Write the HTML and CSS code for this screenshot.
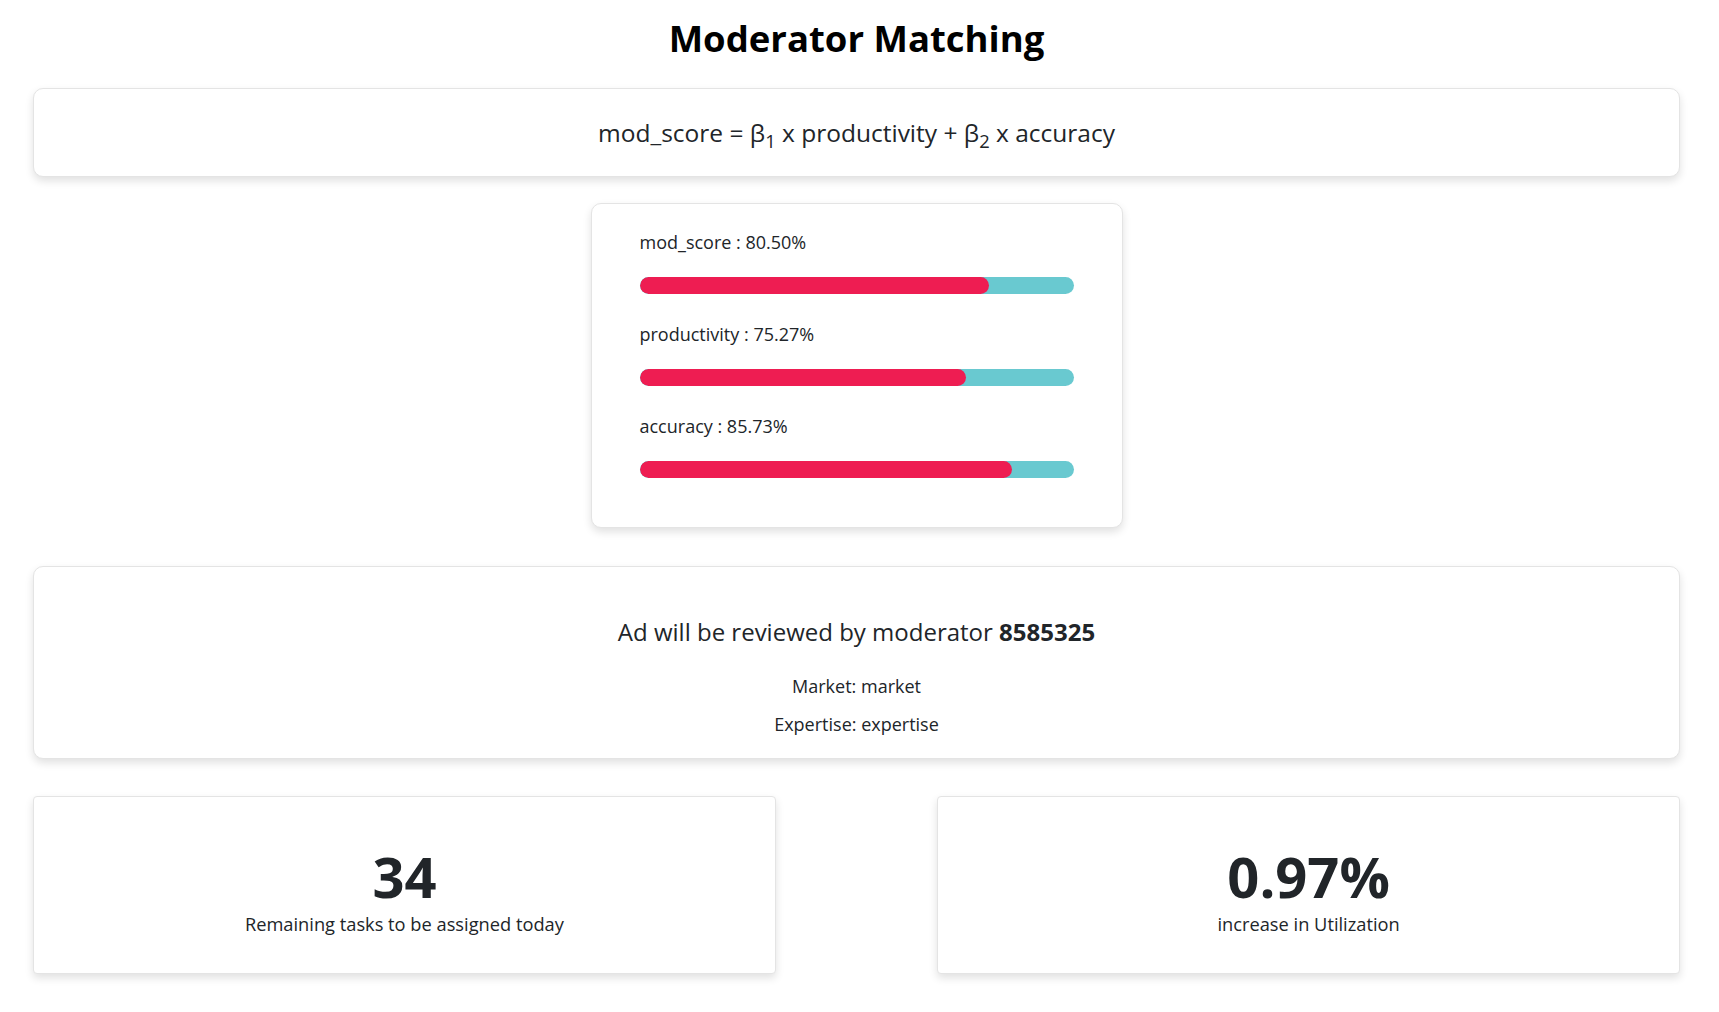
FILE: index.html
```html
<!DOCTYPE html>
<html lang="en">
<head>
<meta charset="utf-8">
<title>Moderator Matching</title>
<link rel="stylesheet" href="styles.css">
</head>
<body>
<div class="page">
  <h1 class="title">Moderator Matching</h1>

  <div class="card formula-card">
    <p class="formula">mod_score = β<sub>1</sub> x productivity + β<sub>2</sub> x accuracy</p>
  </div>

  <div class="card bars-card">
    <div class="metric">
      <div class="metric-label">mod_score : 80.50%</div>
      <div class="bar"><div class="bar-fill" style="width: 80.5%"></div></div>
    </div>
    <div class="metric">
      <div class="metric-label">productivity : 75.27%</div>
      <div class="bar"><div class="bar-fill" style="width: 75.27%"></div></div>
    </div>
    <div class="metric">
      <div class="metric-label">accuracy : 85.73%</div>
      <div class="bar"><div class="bar-fill" style="width: 85.73%"></div></div>
    </div>
  </div>

  <div class="card moderator-card">
    <p class="moderator-line">Ad will be reviewed by moderator <strong>8585325</strong></p>
    <p class="moderator-meta">Market: market</p>
    <p class="moderator-meta">Expertise: expertise</p>
  </div>

  <div class="stats">
    <div class="stat-card">
      <div class="stat-value">34</div>
      <div class="stat-label">Remaining tasks to be assigned today</div>
    </div>
    <div class="stat-card">
      <div class="stat-value">0.97%</div>
      <div class="stat-label">increase in Utilization</div>
    </div>
  </div>
</div>
</body>
</html>
```

FILE: styles.css
```css
* { box-sizing: border-box; }

html, body {
  margin: 0;
  padding: 0;
  background: #ffffff;
}

body {
  font-family: "Open Sans", "Noto Sans", "Liberation Sans", sans-serif;
  color: #212529;
}

.page {
  padding: 0 39px 30px 33px;
  display: flex;
  flex-direction: column;
}

.title {
  margin: 12px 0 0 0;
  height: 76px;
  font-size: 36.5px;
  line-height: 52px;
  font-weight: 700;
  color: #000;
  text-align: center;
}

.card {
  background: #fff;
  border: 1px solid #e4e4e4;
  border-radius: 10px;
  box-shadow: 0 4px 8px rgba(0, 0, 0, 0.12);
}

.formula-card {
  height: 89px;
  display: flex;
  align-items: center;
  justify-content: center;
}

.formula {
  margin: 0;
  font-size: 24.5px;
  line-height: 32px;
  color: #212529;
}

.formula sub {
  font-size: 0.75em;
  line-height: 0;
}

.bars-card {
  align-self: center;
  width: 532px;
  margin-top: 26px;
  padding: 24px 48px 23px 48px;
  display: flex;
  flex-direction: column;
}

.metric {
  height: 92px;
  display: flex;
  flex-direction: column;
}

.metric-label {
  font-size: 18px;
  line-height: 28px;
  color: #212529;
}

.bar {
  margin-top: 21px;
  height: 17px;
  border-radius: 9px;
  background: #69c9d0;
  overflow: hidden;
}

.bar-fill {
  height: 100%;
  border-radius: 9px;
  background: #ee1d52;
}

.moderator-card {
  margin-top: 38px;
  height: 193px;
  padding-top: 49px;
  text-align: center;
}

.moderator-line {
  margin: 0;
  font-size: 24px;
  line-height: 32px;
  color: #212529;
}

.moderator-line strong {
  font-weight: 700;
}

.moderator-meta {
  margin: 25px 0 0 0;
  font-size: 18px;
  line-height: 26px;
}

.moderator-meta + .moderator-meta {
  margin-top: 12px;
}

.stats {
  margin-top: 37px;
  display: flex;
  justify-content: space-between;
}

.stat-card {
  width: 45.1%;
  height: 178px;
  background: #fff;
  border: 1px solid #e4e4e4;
  border-radius: 4px;
  box-shadow: 0 4px 8px rgba(0, 0, 0, 0.12);
  display: flex;
  flex-direction: column;
  align-items: center;
  padding-top: 46px;
}

.stat-value {
  font-size: 56px;
  line-height: 66px;
  font-weight: 700;
  color: #212529;
}

.stat-label {
  margin-top: 2px;
  font-size: 18.25px;
  line-height: 26px;
  color: #212529;
}
```
